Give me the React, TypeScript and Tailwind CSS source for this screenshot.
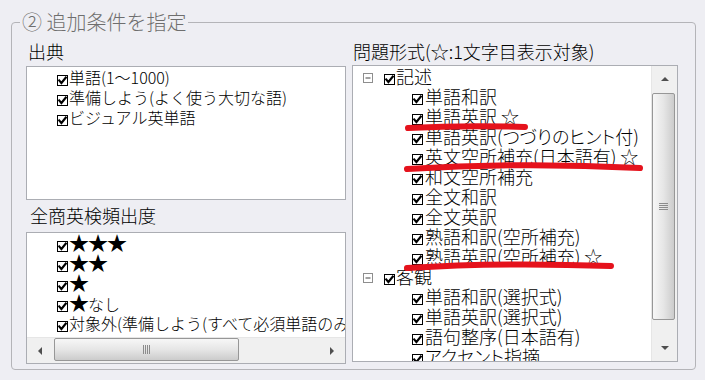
import React from 'react';

const jp = "font-['Noto_Sans_CJK_JP','Noto_Sans',sans-serif]";

function CheckBox() {
  return (
    <svg width="11" height="11" viewBox="0 0 11 11" className="shrink-0">
      <rect x="0.5" y="0.5" width="10" height="10" fill="#fff" stroke="#000" />
      <path d="M2.2 5.4 L4.4 8 L8.8 2.6" fill="none" stroke="#000" strokeWidth="2.1" strokeLinecap="square" />
    </svg>
  );
}

function Expander() {
  return (
    <svg width="10" height="10" viewBox="0 0 10 10" className="shrink-0">
      <rect x="0.5" y="0.5" width="9" height="9" fill="#fff" stroke="#8e8e8e" />
      <path d="M2.5 5 H7.5" stroke="#444" />
    </svg>
  );
}

function Arrow({ dir }: { dir: 'up' | 'down' | 'left' | 'right' }) {
  const pts = {
    up: '0,4 4,0 8,4',
    down: '0,0 8,0 4,4',
    left: '4,0 4,8 0,4',
    right: '0,0 4,4 0,8',
  }[dir];
  const vertical = dir === 'up' || dir === 'down';
  return (
    <svg width={vertical ? 8 : 4} height={vertical ? 4 : 8} viewBox={vertical ? '0 0 8 4' : '0 0 4 8'}>
      <polygon points={pts} fill="#4f4f4f" />
    </svg>
  );
}

function ListRow({ children }: { children: React.ReactNode }) {
  return (
    <div className="flex h-[20px] items-start pl-[30px] whitespace-nowrap">
      <div className="mt-[8px] mr-[1px]">
        <CheckBox />
      </div>
      <span className="text-[16px] leading-[20px] font-light">{children}</span>
    </div>
  );
}

function Stars({ n }: { n: number }) {
  return <span className="text-[20px] leading-[20px] tracking-[-1px]">{'★'.repeat(n)}</span>;
}

function TreeRow({ text, parent }: { text: string; parent?: boolean }) {
  return (
    <div className="flex h-[20px] items-start whitespace-nowrap">
      {parent ? (
        <>
          <div className="mt-[7px] ml-[10px] mr-[11px]">
            <Expander />
          </div>
          <div className="mt-[8px] mr-[1px]">
            <CheckBox />
          </div>
        </>
      ) : (
        <div className="mt-[8px] ml-[59px] mr-[2px]">
          <CheckBox />
        </div>
      )}
      <span className="text-[18px] leading-[20px] font-light [font-feature-settings:'palt']">{text}</span>
    </div>
  );
}

function VScroll() {
  return (
    <div className="flex w-[26px] shrink-0 flex-col bg-[#f0f0f0] border-l border-[#e6e6e6]">
      <div className="flex h-[26px] items-center justify-center">
        <Arrow dir="up" />
      </div>
      <div className="mt-[1px] flex h-[227px] w-[23px] items-center justify-center rounded-[2px] border border-[#979797] bg-gradient-to-r from-[#f7f7f7] via-[#e6e6e6] to-[#cccccc]">
        <div className="flex flex-col gap-[1px]">
          <div className="h-[1px] w-[9px] bg-[#8c8c8c]" />
          <div className="h-[1px] w-[9px] bg-[#8c8c8c]" />
          <div className="h-[1px] w-[9px] bg-[#8c8c8c]" />
          <div className="h-[1px] w-[9px] bg-[#8c8c8c]" />
        </div>
      </div>
      <div className="flex-1" />
      <div className="flex h-[26px] items-center justify-center">
        <Arrow dir="down" />
      </div>
    </div>
  );
}

function HScroll() {
  return (
    <div className="flex h-[26px] shrink-0 bg-[#f0f0f0] border-t border-[#e6e6e6]">
      <div className="flex w-[26px] items-center justify-center">
        <Arrow dir="left" />
      </div>
      <div className="ml-[1px] flex h-[23px] w-[185px] items-center justify-center rounded-[2px] border border-[#979797] bg-gradient-to-b from-[#f7f7f7] via-[#e6e6e6] to-[#cccccc]">
        <div className="flex gap-[1px]">
          <div className="h-[9px] w-[1px] bg-[#8c8c8c]" />
          <div className="h-[9px] w-[1px] bg-[#8c8c8c]" />
          <div className="h-[9px] w-[1px] bg-[#8c8c8c]" />
          <div className="h-[9px] w-[1px] bg-[#8c8c8c]" />
        </div>
      </div>
      <div className="flex-1" />
      <div className="flex w-[26px] items-center justify-center">
        <Arrow dir="right" />
      </div>
    </div>
  );
}

const sources = ['単語(1〜1000)', '準備しよう(よく使う大切な語)', 'ビジュアル英単語'];

const tree: { text: string; parent?: boolean }[] = [
  { text: '記述', parent: true },
  { text: '単語和訳' },
  { text: '単語英訳 ☆' },
  { text: '単語英訳(つづりのヒント付)' },
  { text: '英文空所補充(日本語有) ☆' },
  { text: '和文空所補充' },
  { text: '全文和訳' },
  { text: '全文英訳' },
  { text: '熟語和訳(空所補充)' },
  { text: '熟語英訳(空所補充) ☆' },
  { text: '客観', parent: true },
  { text: '単語和訳(選択式)' },
  { text: '単語英訳(選択式)' },
  { text: '語句整序(日本語有)' },
  { text: 'アクセント指摘' },
];

export default function App() {
  return (
    <div className={`relative h-[380px] w-[705px] overflow-hidden bg-[#eeeef3] pl-[11px] pt-[10px] text-black ${jp}`}>
      <fieldset className="h-[360px] w-[685px] rounded-[4px] border border-[#b4b4b8]">
        <legend className="ml-[8px] px-[2px] text-[20px] leading-[24px] font-light text-[#6e6e6e]">② 追加条件を指定</legend>
        <div className="flex gap-[6px] pl-[14px] pt-[4px]">
          <div className="flex w-[320px] flex-col">
            <div className="h-[26px] pl-[2px] text-[18px] leading-[26px] font-light">出典</div>
            <div className="mt-[2px] h-[134px] overflow-hidden border border-[#abadb3] bg-white">
              {sources.map((s) => (
                <ListRow key={s}>{s}</ListRow>
              ))}
            </div>
            <div className="h-[30px] pl-[4px] text-[18px] leading-[30px] font-light">全商英検頻出度</div>
            <div className="mt-[2px] flex h-[132px] flex-col overflow-hidden border border-[#abadb3] bg-white">
              <div className="flex-1 overflow-hidden">
                <ListRow><Stars n={3} /></ListRow>
                <ListRow><Stars n={2} /></ListRow>
                <ListRow><Stars n={1} /></ListRow>
                <ListRow><Stars n={1} />なし</ListRow>
                <ListRow>対象外(準備しよう(すべて必須単語のみ))</ListRow>
              </div>
              <HScroll />
            </div>
          </div>

          <div className="flex w-[326px] flex-col">
            <div className="h-[26px] pl-[1px] text-[18px] leading-[26px] font-light whitespace-nowrap">問題形式(☆:1文字目表示対象)</div>
            <div className="mt-[1px] flex h-[297px] overflow-hidden border border-[#abadb3] bg-white">
              <div className="flex-1 overflow-hidden">
                {tree.map((t, i) => (
                  <TreeRow key={i} text={t.text} parent={t.parent} />
                ))}
              </div>
              <VScroll />
            </div>
          </div>
        </div>
      </fieldset>

      {/* red hand-drawn markers */}
      <svg className="pointer-events-none absolute inset-0" width="705" height="380" viewBox="0 0 705 380">
        <g fill="none" stroke="#e5121c" strokeWidth="6" strokeLinecap="round">
          <path d="M408 128 Q 465 125 525 127" />
          <path d="M407 169 Q 520 162 640 168" />
          <path d="M407 268 Q 500 262 611 266" />
        </g>
      </svg>
    </div>
  );
}
